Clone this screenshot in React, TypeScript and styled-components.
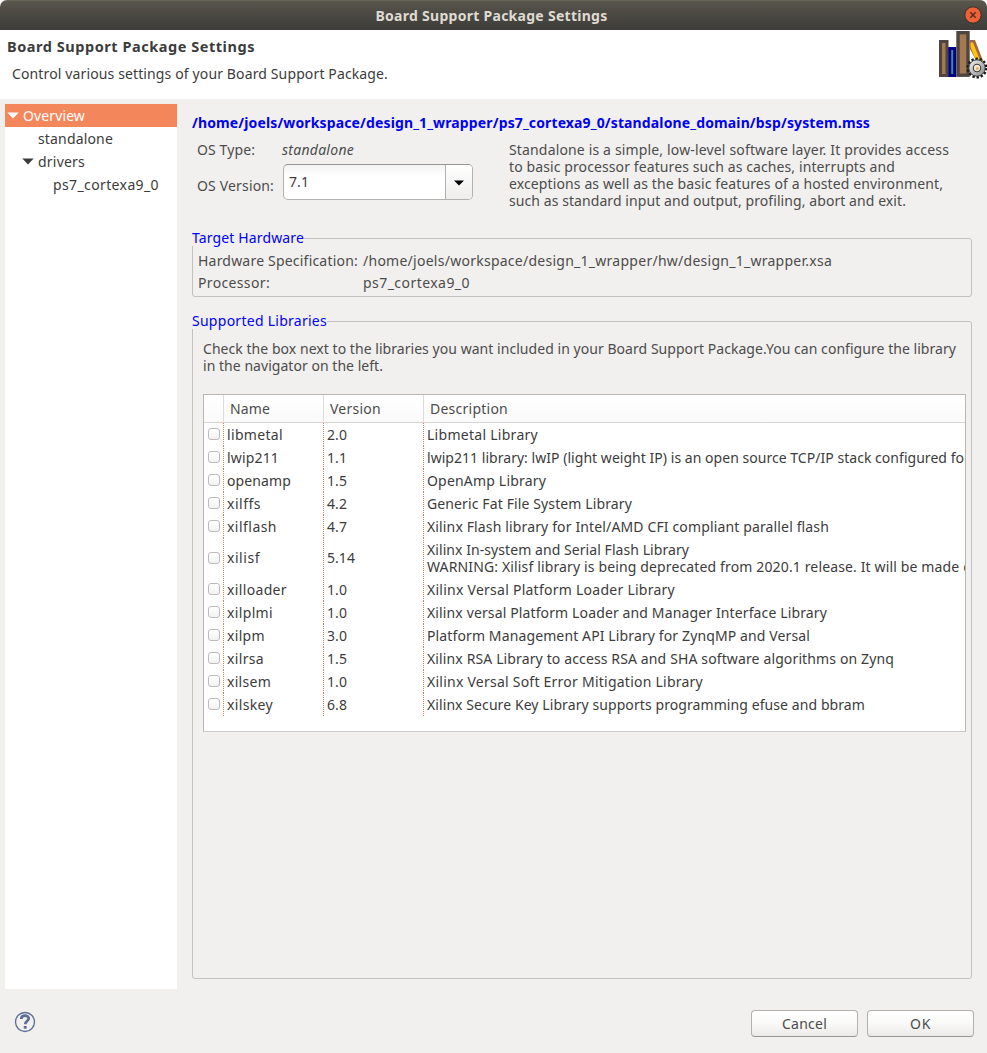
import React, { useLayoutEffect, useRef, useState } from 'react';
import styled, { createGlobalStyle, css } from 'styled-components';

const GlobalStyle = createGlobalStyle`
  * { box-sizing: border-box; }
  html, body { margin: 0; padding: 0; background: #fff; }
  body {
    font-family: "Noto Sans", "Open Sans", sans-serif;
    font-size: 14px;
    line-height: 17px;
    color: #3c3c3c;
  }
`;

const FitSpan = styled.span`
  display: inline-block;
  white-space: pre;
`;

/* Text whose tracking is adjusted so the line occupies a fixed width. */
function Fit({ w, children }: { w: number; children: string }) {
  const ref = useRef<HTMLSpanElement>(null);
  const [spacing, setSpacing] = useState(0);
  useLayoutEffect(() => {
    if (!ref.current) return;
    const natural = ref.current.getBoundingClientRect().width;
    setSpacing((w - natural) / children.length);
  }, [w, children]);
  return <FitSpan ref={ref} style={{ letterSpacing: spacing }}>{children}</FitSpan>;
}

const Dialog = styled.div`
  width: 987px;
  height: 1053px;
  display: flex;
  flex-direction: column;
  background: #f1f0ee;
  border-radius: 7px 7px 0 0;
  overflow: hidden;
`;

const TitleBar = styled.header`
  height: 30px;
  flex: none;
  display: grid;
  grid-template-columns: 1fr auto 1fr;
  align-items: center;
  padding: 0 5px 1px;
  background: linear-gradient(#5a574d, #504e47 25%, #3d3c38);
  border-top: 1px solid #66645a;
  color: #dfdbd2;
  font-weight: 700;
`;

const WindowTitle = styled.div`
  grid-column: 2;
  margin-right: 4px;
`;

const CloseButton = styled.button`
  justify-self: end;
  padding: 0;
  border: 0;
  background: none;
  width: 18px;
  height: 18px;
  svg { display: block; }
`;

const Banner = styled.section`
  height: 69px;
  flex: none;
  display: flex;
  justify-content: space-between;
  background: #fff;
  padding: 8px 0 0 7px;
`;

const BannerTitle = styled.h1`
  margin: 0;
  font-size: 14.5px;
  line-height: 17px;
  font-weight: 700;
`;

const BannerText = styled.p`
  margin: 10px 0 0 5px;
`;

const BannerIcon = styled.svg`
  display: block;
  margin-top: -8px;
`;

const Body = styled.main`
  flex: none;
  height: 890px;
  display: flex;
  padding: 5px 15px 0 5px;
  gap: 15px;
`;

const Tree = styled.nav`
  width: 172px;
  height: 885px;
  background: #fff;
`;

const TreeRow = styled.div<{ $indent: number; $selected?: boolean }>`
  height: 23px;
  display: flex;
  align-items: center;
  gap: 4px;
  padding-left: ${p => p.$indent}px;
  ${p => p.$selected && css`
    background: #f4865c;
    color: #fff;
  `}
`;

const Content = styled.div`
  flex: 1;
  min-width: 0;
  display: flex;
  flex-direction: column;
`;

const PathLink = styled.div`
  margin-top: 10px;
  color: #0000f5;
  font-weight: 700;
`;

const OsSection = styled.div`
  display: flex;
  height: 92px;
  padding: 10px 0 0 5px;
  color: #4c4c4c;
`;

const OsGrid = styled.div`
  width: 312px;
  display: grid;
  grid-template-columns: 86px 190px;
  grid-template-rows: 17px 36px;
  row-gap: 6px;
  align-content: start;
`;

const VersionLabel = styled.div`
  padding-top: 13px;
`;

const OsType = styled.em`
  margin-left: -1px;
`;

const Combo = styled.div`
  display: flex;
  align-items: center;
  justify-content: space-between;
  height: 36px;
  padding-left: 5px;
  border: 1px solid #b3b1ae;
  border-top-color: #979694;
  border-radius: 5px;
  background: linear-gradient(#f3f3f3, #fff 35%);
  color: #3c3c3c;
  overflow: hidden;
`;

const ComboValue = styled.div`
  padding-bottom: 1px;
`;

const ComboArrow = styled.div`
  width: 27px;
  align-self: stretch;
  display: flex;
  align-items: center;
  justify-content: center;
  padding-top: 1px;
  border-left: 1px solid #b3b1ae;
  background: linear-gradient(#fff, #eeedec);
`;

const Group = styled.section<{ $h: number; $gap: number }>`
  position: relative;
  height: ${p => p.$h}px;
  margin-top: ${p => p.$gap}px;
  border: 1px solid #c3c1be;
  border-radius: 3px;
  color: #4c4c4c;
`;

const GroupTitle = styled.h2`
  position: absolute;
  left: -1px;
  top: -10px;
  margin: 0;
  height: 17px;
  font-size: 14px;
  line-height: 17px;
  font-weight: 400;
  color: #0000f5;
  background: #f1f0ee;
`;

const HardwareGrid = styled.div`
  display: grid;
  grid-template-columns: 165px 1fr;
  row-gap: 5px;
  padding: 13px 0 0 5px;
`;

const Hint = styled.div`
  padding: 18px 0 0 10px;
`;

const Table = styled.div`
  margin: 20px 5px 0 10px;
  height: 338px;
  border: 1px solid #bab7b3;
  border-bottom-color: #cfcdca;
  background: #fff;
  overflow: hidden;
`;

const columns = '20px 100px 100px 1fr';

const HeadRow = styled.div`
  display: grid;
  grid-template-columns: ${columns};
  height: 28px;
  border-bottom: 1px solid #d8d6d3;
  background: linear-gradient(#fff, #fafafa);
`;

const HeadCell = styled.div`
  display: flex;
  align-items: center;
  padding-left: 6px;
  border-right: 1px solid #dedcda;
  &:last-child { border-right: 0; }
`;

const Row = styled.div<{ $tall?: boolean }>`
  display: grid;
  grid-template-columns: ${columns};
  height: ${p => (p.$tall ? 40 : 23)}px;
  color: #3c3c3c;
`;

const Cell = styled.div`
  display: flex;
  flex-direction: column;
  justify-content: center;
  align-items: flex-start;
  min-width: 0;
  padding: 0 0 1px 3px;
  overflow: hidden;
  background: repeating-linear-gradient(#d98158 0 1px, #fff 1px 2px) right / 1px 100% no-repeat;
  &:last-child { background: none; }
`;

const CheckBox = styled.span`
  width: 12px;
  height: 12px;
  margin-left: 1px;
  border: 1px solid #bdbbb9;
  border-radius: 3px;
  background: linear-gradient(#fff, #f2f2f2);
`;

const Footer = styled.footer`
  flex: 1;
  display: flex;
  align-items: flex-start;
  padding: 21px 13px 0 14px;
`;

const HelpIcon = styled.svg`
  display: block;
  margin: 1px auto 0 0;
`;

const Button = styled.button`
  width: 107px;
  height: 27px;
  margin-left: 9px;
  padding: 0;
  border: 1px solid #b3b1ae;
  border-bottom-color: #979591;
  border-radius: 4px;
  background: linear-gradient(#fff, #f9f9f8 50%, #eceae8);
  font: inherit;
  color: #4c4c4c;
`;

const Expander = () => (
  <svg width="12" height="7" viewBox="0 0 12 7"><path d="M0.3 0.5H11.7L6 6.5Z" fill="currentColor" /></svg>
);

type Library = [name: string, nameWidth: number, version: string, lines: [string, number][]];

const libraries: Library[] = [
  ['libmetal', 56, '2.0', [['Libmetal Library', 111]]],
  ['lwip211', 52, '1.1', [['lwip211 library: lwIP (light weight IP) is an open source TCP/IP stack configured fo', 537]]],
  ['openamp', 64, '1.5', [['OpenAmp Library', 119]]],
  ['xilffs', 34, '4.2', [['Generic Fat File System Library', 205]]],
  ['xilflash', 50, '4.7', [['Xilinx Flash library for Intel/AMD CFI compliant parallel flash', 402]]],
  ['xilisf', 33, '5.14', [['Xilinx In-system and Serial Flash Library', 262], ['WARNING: Xilisf library is being deprecated from 2020.1 release. It will be made c', 543]]],
  ['xilloader', 60, '1.0', [['Xilinx Versal Platform Loader Library', 248]]],
  ['xilplmi', 46, '1.0', [['Xilinx versal Platform Loader and Manager Interface Library', 400]]],
  ['xilpm', 38, '3.0', [['Platform Management API Library for ZynqMP and Versal', 383]]],
  ['xilrsa', 37, '1.5', [['Xilinx RSA Library to access RSA and SHA software algorithms on Zynq', 467]]],
  ['xilsem', 44, '1.0', [['Xilinx Versal Soft Error Mitigation Library', 276]]],
  ['xilskey', 46, '6.8', [['Xilinx Secure Key Library supports programming efuse and bbram', 438]]],
];

export default function App() {
  return (
    <Dialog>
      <GlobalStyle />
      <TitleBar>
        <WindowTitle><Fit w={232}>Board Support Package Settings</Fit></WindowTitle>
        <CloseButton aria-label="Close">
          <svg width="18" height="18" viewBox="0 0 18 18">
            <circle cx="9" cy="9" r="8.2" fill="#ef6036" stroke="#33312c" />
            <path d="M6.3 6.3L11.7 11.7M11.7 6.3L6.3 11.7" stroke="#54301f" strokeWidth="1.5" />
          </svg>
        </CloseButton>
      </TitleBar>
      <Banner>
        <div>
          <BannerTitle><Fit w={248}>Board Support Package Settings</Fit></BannerTitle>
          <BannerText><Fit w={376}>Control various settings of your Board Support Package.</Fit></BannerText>
        </div>
        <BannerIcon width="49" height="50" viewBox="0 0 49 50">
          <defs>
            <linearGradient id="gear" x1="0" y1="0" x2="1" y2="1">
              <stop offset="0" stopColor="#f2f2f2" />
              <stop offset="1" stopColor="#8a8a8a" />
            </linearGradient>
          </defs>
          <rect x="2.500" y="11.500" width="6.500" height="34" fill="#a47850" stroke="#4e4440" strokeWidth="3" />
          <rect x="11.700" y="18.500" width="5" height="27" fill="#3d8c9c" stroke="#000080" strokeWidth="3" />
          <rect x="20" y="2.700" width="10" height="42.500" fill="#a47850" stroke="#4e4440" strokeWidth="3.400" />
          <path d="M32 10H37L45 31L40 34L32 19Z" fill="#a0663f" />
          <path d="M32.500 12.500H35L42 30L38.500 32L32.500 17Z" fill="#ffc20e" />
          <circle cx="39" cy="38" r="9.300" fill="none" stroke="#1c1c1c" strokeWidth="2.400" strokeDasharray="2.400 1.800" />
          <circle cx="39" cy="38" r="8.200" fill="url(#gear)" stroke="#333" strokeWidth="0.900" />
          <circle cx="39" cy="38" r="3.700" fill="#f3ead4" stroke="#3a3a3a" strokeWidth="1.100" />
          <circle cx="39.300" cy="38.500" r="1.500" fill="#dcb468" />
        </BannerIcon>
      </Banner>
      <Body>
        <Tree>
          <TreeRow $indent={2} $selected><Expander /><Fit w={62}>Overview</Fit></TreeRow>
          <TreeRow $indent={33}><Fit w={75}>standalone</Fit></TreeRow>
          <TreeRow $indent={17}><Expander /><Fit w={47}>drivers</Fit></TreeRow>
          <TreeRow $indent={48}><Fit w={106}>ps7_cortexa9_0</Fit></TreeRow>
        </Tree>
        <Content>
          <PathLink><Fit w={678}>/home/joels/workspace/design_1_wrapper/ps7_cortexa9_0/standalone_domain/bsp/system.mss</Fit></PathLink>
          <OsSection>
            <OsGrid>
              <div><Fit w={58}>OS Type:</Fit></div>
              <OsType><Fit w={72}>standalone</Fit></OsType>
              <VersionLabel><Fit w={77}>OS Version:</Fit></VersionLabel>
              <Combo>
                <ComboValue><Fit w={20}>7.1</Fit></ComboValue>
                <ComboArrow><svg width="10" height="6" viewBox="0 0 10 6"><path d="M0 0.500H10L5 5.500Z" /></svg></ComboArrow>
              </Combo>
            </OsGrid>
            <div>
              <div><Fit w={440}>Standalone is a simple, low-level software layer. It provides access</Fit></div>
              <div><Fit w={386}>to basic processor features such as caches, interrupts and</Fit></div>
              <div><Fit w={434}>exceptions as well as the basic features of a hosted environment,</Fit></div>
              <div><Fit w={397}>such as standard input and output, profiling, abort and exit.</Fit></div>
            </div>
          </OsSection>
          <Group $h={59} $gap={15}>
            <GroupTitle><Fit w={112}>Target Hardware</Fit></GroupTitle>
            <HardwareGrid>
              <div><Fit w={160}>Hardware Specification:</Fit></div>
              <div><Fit w={469}>/home/joels/workspace/design_1_wrapper/hw/design_1_wrapper.xsa</Fit></div>
              <div><Fit w={72}>Processor:</Fit></div>
              <div><Fit w={107}>ps7_cortexa9_0</Fit></div>
            </HardwareGrid>
          </Group>
          <Group $h={658} $gap={24}>
            <GroupTitle><Fit w={135}>Supported Libraries</Fit></GroupTitle>
            <Hint>
              <div><Fit w={753}>Check the box next to the libraries you want included in your Board Support Package.You can configure the library</Fit></div>
              <div><Fit w={180}>in the navigator on the left.</Fit></div>
            </Hint>
            <Table>
              <HeadRow>
                <HeadCell />
                <HeadCell><Fit w={40}>Name</Fit></HeadCell>
                <HeadCell><Fit w={51}>Version</Fit></HeadCell>
                <HeadCell><Fit w={78}>Description</Fit></HeadCell>
              </HeadRow>
              {libraries.map(([name, width, version, lines]) => (
                <Row key={name} $tall={lines.length > 1}>
                  <Cell><CheckBox /></Cell>
                  <Cell><Fit w={width}>{name}</Fit></Cell>
                  <Cell><Fit w={version.length > 3 ? 28 : 20}>{version}</Fit></Cell>
                  <Cell>{lines.map(([text, w]) => <Fit key={text} w={w}>{text}</Fit>)}</Cell>
                </Row>
              ))}
            </Table>
          </Group>
        </Content>
      </Body>
      <Footer>
        <HelpIcon width="22" height="22" viewBox="0 0 22 22" fill="none" stroke="#5a6d92">
          <circle cx="11" cy="11" r="9.500" strokeWidth="1.300" />
          <path d="M7.300 8C7.300 3.600 14.700 3.800 14.700 7.500C14.700 10 11.200 10 11.200 13.300" strokeWidth="2.700" />
          <path d="M11.200 15V17.700" strokeWidth="2.900" />
        </HelpIcon>
        <Button><Fit w={45}>Cancel</Fit></Button>
        <Button><Fit w={21}>OK</Fit></Button>
      </Footer>
    </Dialog>
  );
}
